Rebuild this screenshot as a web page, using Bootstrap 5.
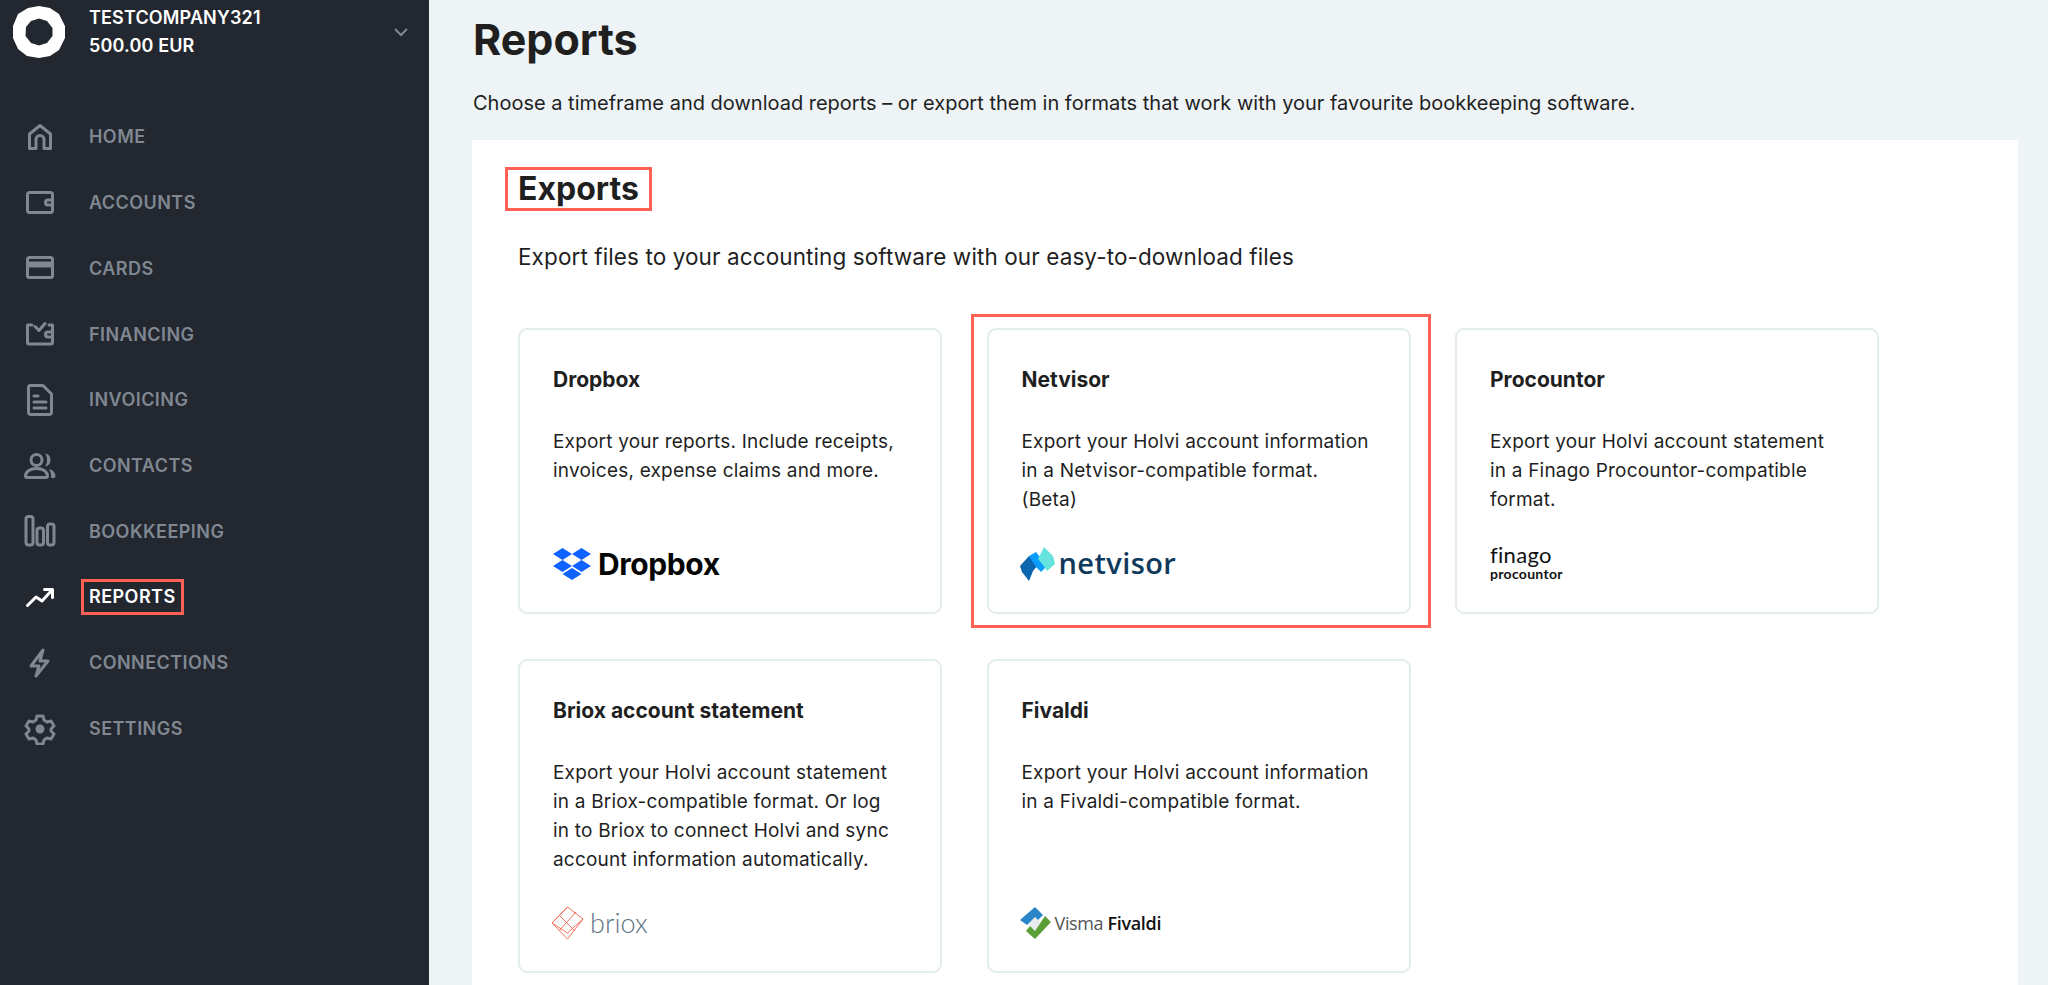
<!DOCTYPE html>
<html lang="en">
<head>
  <meta charset="UTF-8">
  <title>Reports</title>
  <link href="https://cdn.jsdelivr.net/npm/bootstrap@5.3.3/dist/css/bootstrap.min.css" rel="stylesheet">
  <style>
    html, body { height: 100%; overflow: hidden; }
    body {
      background: #eef3f6;
      color: #1f1f1f;
      font-family: "Inter", "Liberation Sans", sans-serif;
    }
    .side {
      width: 429px;
      height: 985px;
      background: #23272f;
      flex-shrink: 0;
    }
    .side-top { height: 64px; padding: 0 19px 0 13px; }
    .side-logo { width: 52px; height: 52px; margin-right: 24px; }
    .side-co { color: #fff; font-size: 18px; font-weight: 600; line-height: 28px; letter-spacing: .15px; }
    .side-nav { padding-top: 40px; padding-left: 24px; }
    .side-item {
      height: 65.75px;
      color: #7f8892;
      font-size: 18px;
      font-weight: 600;
      letter-spacing: .45px;
    }
    .side-item.on { color: #fff; }
    .side-ico { width: 32px; height: 32px; margin-right: 33px; }
    .side-item.on span { outline: 3px solid #ff6154; outline-offset: 5px; line-height: 20px; }
    .main-area { padding: 0 30px 0 43px; flex: 1; min-width: 0; }
    .pg-title { font-size: 43px; font-weight: 700; line-height: 50px; margin: 14px 0 0; padding-left: 1px; }
    .pg-intro { font-size: 20px; line-height: 28px; margin: 25px 0 23px; padding-left: 1px; }
    .panel-white { background: #fff; height: 845px; padding: 27px 46px 0; }
    .exp-title {
      display: block;
      width: fit-content;
      font-size: 32px;
      font-weight: 700;
      line-height: 36px;
      margin: 0 0 0 -13px;
      padding: 1px 10px;
      border: 3px solid #ff6154;
    }
    .exp-sub { font-size: 22.5px; letter-spacing: .1px; line-height: 30px; margin: 31px 0 56px; }
    .card-grid { display: grid; grid-template-columns: repeat(3, 424px); gap: 45px 44.5px; }
    .exp-card {
      height: 286px;
      border: 2px solid #e3ecee;
      border-radius: 9px;
      padding: 36px 33px 28px;
    }
    .exp-card.tall { height: 314px; }
    .mark-box {
      border: 3px solid #ff6154;
      margin: -14px -20px -14px -16px;
      padding: 11px 17px 11px 13px;
    }
    .exp-name { font-size: 21px; font-weight: 700; line-height: 28px; margin-bottom: 33px; }
    .exp-text { font-size: 19px; line-height: 29px; margin: 0; letter-spacing: .2px; white-space: nowrap; }
    .logo-slot { height: 40px; margin-top: auto; }
    .logo-slot svg { display: block; flex-shrink: 0; }
    .logo-nudge { margin-left: -2px; }
    .brand-dbx { font-size: 30px; font-weight: 700; color: #050505; letter-spacing: -.4px; margin-left: 7px; line-height: 40px; }
    .brand-net { font-family: "Open Sans", sans-serif; font-size: 29px; font-weight: 600; color: #0f3a5c; letter-spacing: .4px; margin-left: 4px; line-height: 40px; margin-top: -3px; }
    .brand-fin { color: #111; font-family: "Lato", sans-serif; margin-top: -2px; }
    .brand-fin b { display: block; font-size: 22px; font-weight: 400; line-height: 22px; letter-spacing: .3px; }
    .brand-fin i { display: block; font-size: 14px; font-weight: 700; font-style: normal; line-height: 16px; letter-spacing: .3px; }
    .brand-brx { font-family: "Lato", sans-serif; font-size: 27px; font-weight: 300; color: #5f7484; margin-left: 6px; line-height: 40px; }
    .brand-fiv { font-family: "Open Sans", sans-serif; font-size: 18px; color: #555; margin-left: 4px; line-height: 40px; letter-spacing: -.35px; }
    .brand-fiv b { font-weight: 600; color: #111; }
  </style>
</head>
<body class="d-flex">

<nav class="side d-flex flex-column">
  <div class="side-top d-flex align-items-center">
    <svg class="side-logo" viewBox="0 0 52 52"><path fill="#fff" fill-rule="evenodd" d="M26 0 37 2 46 8 52 20 52 32 46 44 37 50 26 52 14 50 5 43 0 32 0 20 5 8 15 2ZM26 12.500 18 15 13 21 12.500 30 18 37 26 39.500 34 37 39.500 30 39.500 22 34 15Z"/></svg>
    <div class="side-co flex-grow-1">TESTCOMPANY321<br>500.00 EUR</div>
    <svg width="18" height="18" viewBox="0 0 18 18" fill="none" stroke="#7f8892" stroke-width="2"><path d="M3 6l6 6 6-6"/></svg>
  </div>
  <div class="side-nav">
    <div class="side-item d-flex align-items-center">
      <svg class="side-ico" viewBox="0 0 32 32" fill="none" stroke="currentColor" stroke-width="3" stroke-linejoin="round"><path d="M5.500 27.500V13L16 4.500 26.500 13v14.500h-6.500V18.500a4 4 0 0 0-8 0v9z"/></svg>
      <span>HOME</span>
    </div>
    <div class="side-item d-flex align-items-center">
      <svg class="side-ico" viewBox="0 0 32 32" fill="none" stroke="currentColor" stroke-width="3" stroke-linejoin="round"><rect x="3.500" y="5.500" width="25" height="20" rx="2"/><path d="M28.500 13H24a2.500 2.500 0 0 0 0 5h4.500"/></svg>
      <span>ACCOUNTS</span>
    </div>
    <div class="side-item d-flex align-items-center">
      <svg class="side-ico" viewBox="0 0 32 32" fill="none" stroke="currentColor" stroke-width="3" stroke-linejoin="round"><rect x="3.500" y="5.500" width="25" height="20" rx="2"/><path d="M3.500 11h25M3.500 14h25"/></svg>
      <span>CARDS</span>
    </div>
    <div class="side-item d-flex align-items-center">
      <svg class="side-ico" viewBox="0 0 32 32" fill="none" stroke="currentColor" stroke-width="3" stroke-linejoin="round" stroke-linecap="round"><path d="M8 7H3.500v17.500a1.500 1.500 0 0 0 1.500 1.500h22a1.500 1.500 0 0 0 1.500-1.500V7H25"/><path d="M28.500 14H24a2.500 2.500 0 0 0 0 5h4.500M11 8.500l4 4 6-7"/></svg>
      <span>FINANCING</span>
    </div>
    <div class="side-item d-flex align-items-center">
      <svg class="side-ico" viewBox="0 0 32 32" fill="none" stroke="currentColor" stroke-width="3" stroke-linejoin="round" stroke-linecap="round"><path d="M6 1.500h13l8.500 8.500v18a2.500 2.500 0 0 1-2.500 2.500H7a2.500 2.500 0 0 1-2.500-2.500V3.500A2 2 0 0 1 6 1.500z"/><path d="M10 12h4M10 18h12M10 24h12"/></svg>
      <span>INVOICING</span>
    </div>
    <div class="side-item d-flex align-items-center">
      <svg class="side-ico" viewBox="0 0 32 32" fill="none" stroke-linejoin="round" stroke-linecap="round"><g stroke="currentColor" stroke-width="3"><circle cx="12.500" cy="10" r="5.500"/><path d="M1.500 26c0-4.500 5-7.500 11-7.500S23.500 21.500 23.500 26c0 1-.8 1.500-1.800 1.500H3.300C2.300 27.500 1.500 27 1.500 26z"/></g><path fill="currentColor" d="M21 3.500c4 .5 5.500 3.500 5.500 6.500s-1.500 6-5.500 6.500c1.500-2 2-4 2-6.500s-.5-4.500-2-6.500zM25 19c4 1 6.500 4 6.500 7 0 1.500-1 2-2.500 2h-2c.5-3.500-.5-6.500-2-9z"/></svg>
      <span>CONTACTS</span>
    </div>
    <div class="side-item d-flex align-items-center">
      <svg class="side-ico" viewBox="0 0 32 32" fill="none" stroke="currentColor" stroke-width="3"><rect x="2" y="1.500" width="7" height="28.500" rx="2.500"/><rect x="13" y="13" width="6.500" height="17" rx="2.500"/><rect x="23.500" y="9" width="6.500" height="21" rx="2.500"/></svg>
      <span>BOOKKEEPING</span>
    </div>
    <div class="side-item on d-flex align-items-center">
      <svg class="side-ico" viewBox="0 0 32 32" fill="none" stroke="currentColor" stroke-width="3" stroke-linejoin="round" stroke-linecap="round"><path d="M3.500 24.500 12 16l6 4 10-11M20.500 8.500h8v8"/></svg>
      <span>REPORTS</span>
    </div>
    <div class="side-item d-flex align-items-center">
      <svg class="side-ico" viewBox="0 0 32 32" fill="none" stroke="currentColor" stroke-width="3" stroke-linejoin="round"><path d="M19 3 7 19h8l-3 10 12-15h-8z"/></svg>
      <span>CONNECTIONS</span>
    </div>
    <div class="side-item d-flex align-items-center">
      <svg class="side-ico" viewBox="0 0 32 32"><path fill="none" stroke="currentColor" stroke-width="3" stroke-linejoin="round" d="M13 3h6l1 4 3 2 4-1 3 5-3 3v2l3 3-3 5-4-1-3 2-1 4h-6l-1-4-3-2-4 1-3-5 3-3v-2l-3-3 3-5 4 1 3-2z"/><circle cx="16" cy="16" r="4.500" fill="currentColor"/></svg>
      <span>SETTINGS</span>
    </div>
  </div>
</nav>

<main class="main-area">
  <h1 class="pg-title">Reports</h1>
  <p class="pg-intro">Choose a timeframe and download reports – or export them in formats that work with your favourite bookkeeping software.</p>
  <section class="panel-white">
    <h2 class="exp-title">Exports</h2>
    <p class="exp-sub">Export files to your accounting software with our easy-to-download files</p>
    <div class="card-grid">
      <div class="card exp-card">
        <div class="exp-name">Dropbox</div>
        <p class="exp-text">Export your reports. Include receipts,<br>invoices, expense claims and more.</p>
        <div class="logo-slot d-flex align-items-center">
          <svg width="38" height="32" viewBox="0 0 38 32" fill="#0f62fe"><path d="M9.500 0 19 6 9.500 12 0 6zM28.500 0 38 6l-9.500 6L19 6zM0 18l9.500-6L19 18l-9.500 6zM28.500 12 38 18l-9.500 6L19 18zM9.500 26 19 20l9.500 6L19 32z"/></svg>
          <span class="brand-dbx">Dropbox</span>
        </div>
      </div>
      <div class="mark-box">
        <div class="card exp-card">
          <div class="exp-name">Netvisor</div>
          <p class="exp-text">Export your Holvi account information<br>in a Netvisor-compatible format.<br>(Beta)</p>
          <div class="logo-slot logo-nudge d-flex align-items-center">
            <svg width="35" height="34" viewBox="0 0 35 34"><path fill="#0b66ad" d="M0 19 9 9l9 9-5 6-4 10-7-9z"/><path fill="#0a9bff" d="M9 9l7-4 11 14-6 6-5-5z"/><path fill="#66e3dc" d="M24 0l9 9 2 8-8 7-4-6-5-6z"/></svg>
            <span class="brand-net">netvisor</span>
          </div>
        </div>
      </div>
      <div class="card exp-card">
        <div class="exp-name">Procountor</div>
        <p class="exp-text">Export your Holvi account statement<br>in a Finago Procountor-compatible<br>format.</p>
        <div class="logo-slot d-flex align-items-center">
          <span class="brand-fin"><b>finago</b><i>procountor</i></span>
        </div>
      </div>
      <div class="card exp-card tall">
        <div class="exp-name">Briox account statement</div>
        <p class="exp-text">Export your Holvi account statement<br>in a Briox-compatible format. Or log<br>in to Briox to connect Holvi and sync<br>account information automatically.</p>
        <div class="logo-slot logo-nudge d-flex align-items-center">
          <svg width="33" height="34" viewBox="0 0 33 34" fill="none" stroke="#f0705a" stroke-width="1"><path d="M16.500 1 32 13 16.500 33 1 17zM16.500 1 1 17M8 9 24 25M25 6 8 25M1 17 16.500 27 32 13"/></svg>
          <span class="brand-brx">briox</span>
        </div>
      </div>
      <div class="card exp-card tall">
        <div class="exp-name">Fivaldi</div>
        <p class="exp-text">Export your Holvi account information<br>in a Fivaldi-compatible format.</p>
        <div class="logo-slot logo-nudge d-flex align-items-center">
          <svg width="31" height="32" viewBox="0 0 31 32"><path fill="#e9ecee" d="M15 10 22 16 15 24 8 17z"/><path fill="#2a86c9" d="M15 0l8 8-5 5-3-3-8 8-7-5z"/><path fill="#5a9e37" d="M25 9l6 6-16 17-9-8 4-5 5 5z"/></svg>
          <span class="brand-fiv">Visma <b>Fivaldi</b></span>
        </div>
      </div>
    </div>
  </section>
</main>

<script src="https://cdn.jsdelivr.net/npm/bootstrap@5.3.3/dist/js/bootstrap.bundle.min.js"></script>
</body>
</html>
